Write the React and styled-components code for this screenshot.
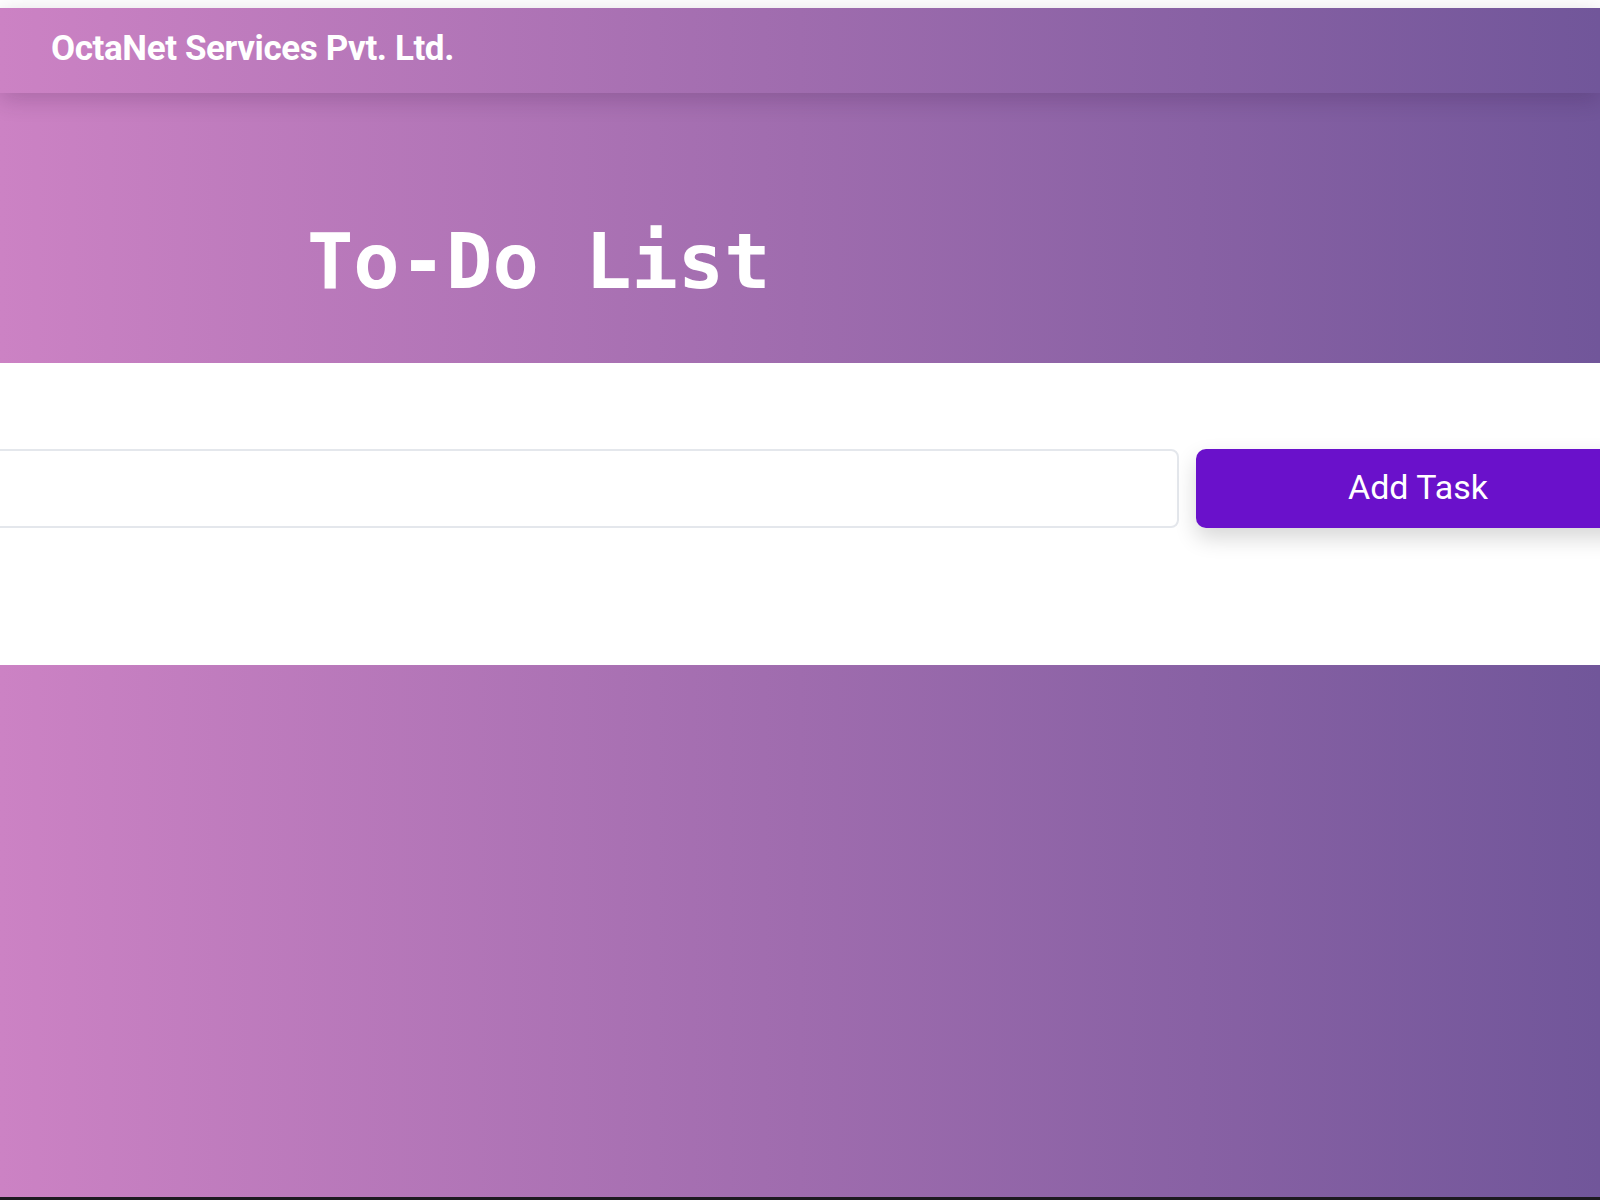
import React, { useState } from 'react';
import styled, { createGlobalStyle, css } from 'styled-components';

const GlobalStyle = createGlobalStyle`
  html, body {
    margin: 0;
    padding: 0;
    background: #ffffff;
    overflow: hidden;
  }
  * {
    box-sizing: border-box;
  }
`;

const gradient = css`
  background: linear-gradient(90deg, #cc82c4 0%, #9f6cae 50%, #71569a 100%);
`;

const Page = styled.div`
  display: flex;
  flex-direction: column;
  height: 1200px;
  padding-top: 8px;
  background: #ffffff;
  font-family: Roboto, "Liberation Sans", Arial, sans-serif;
`;

const Navbar = styled.header`
  ${gradient};
  position: relative;
  z-index: 2;
  display: flex;
  align-items: center;
  height: 85px;
  padding: 0 0 4px 51px;
  box-shadow: 0 6px 22px rgba(40, 10, 50, 0.2);
`;

const Brand = styled.span`
  color: #ffffff;
  font-size: 35px;
  font-weight: 700;
  letter-spacing: -0.4px;
`;

const Hero = styled.section`
  ${gradient};
  height: 270px;
  padding: 130px 0 0 307px;
`;

const Title = styled.h1`
  margin: 0;
  color: #ffffff;
  font-family: "DejaVu Sans Mono", "Liberation Mono", monospace;
  font-size: 77px;
  font-weight: 700;
  line-height: 77px;
`;

const Main = styled.main`
  height: 302px;
  padding-top: 86px;
  background: #ffffff;
`;

const TaskForm = styled.form`
  display: flex;
  gap: 17px;
  height: 79px;
  margin: 0 -40px 0 -20px;
`;

const TaskInput = styled.input`
  flex: 1;
  height: 100%;
  padding: 0 20px;
  border: 2px solid #e4e7ec;
  border-radius: 8px;
  background: #ffffff;
  font-family: inherit;
  font-size: 28px;
  color: #333333;
  outline: none;
`;

const AddButton = styled.button`
  width: 444px;
  height: 100%;
  border: none;
  border-radius: 10px;
  background: #6a11cb;
  color: #ffffff;
  font-family: inherit;
  font-size: 34px;
  font-weight: 400;
  padding-bottom: 4px;
  cursor: pointer;
  box-shadow: 0 10px 22px rgba(0, 0, 0, 0.16);
`;

const Backdrop = styled.section`
  ${gradient};
  flex: 1;
`;

const BottomEdge = styled.div`
  height: 3px;
  background: #1d1a20;
`;

export default function App() {
  const [task, setTask] = useState('');

  return (
    <>
      <GlobalStyle />
      <Page>
        <Navbar>
          <Brand>OctaNet Services Pvt. Ltd.</Brand>
        </Navbar>
        <Hero>
          <Title>To-Do List</Title>
        </Hero>
        <Main>
          <TaskForm onSubmit={(e) => e.preventDefault()}>
            <TaskInput value={task} onChange={(e) => setTask(e.target.value)} />
            <AddButton type="submit">Add Task</AddButton>
          </TaskForm>
        </Main>
        <Backdrop />
        <BottomEdge />
      </Page>
    </>
  );
}
